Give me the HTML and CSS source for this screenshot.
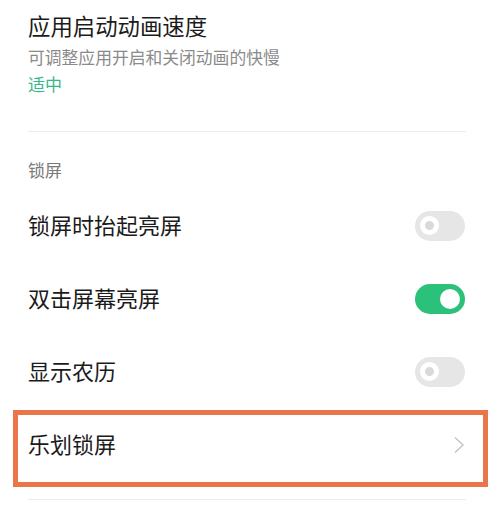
FILE: index.html
```html
<!DOCTYPE html>
<html lang="zh-CN">
<head>
  <meta charset="UTF-8">
  <title>设置</title>
  <link rel="stylesheet" href="styles.css">
</head>
<body>
  <div class="seite">
    <!-- Animation speed -->
    <div class="eintrag-block">
      <div class="titel">应用启动动画速度</div>
      <div class="untertitel">可调整应用开启和关闭动画的快慢</div>
      <div class="wert">适中</div>
    </div>

    <div class="trenner"></div>

    <div class="gruppe">锁屏</div>

    <div class="zeile">
      <span class="zeile-text">锁屏时抬起亮屏</span>
      <span class="schalter"><span class="knopf"></span></span>
    </div>
    <div class="zeile">
      <span class="zeile-text">双击屏幕亮屏</span>
      <span class="schalter an"><span class="knopf"></span></span>
    </div>
    <div class="zeile">
      <span class="zeile-text">显示农历</span>
      <span class="schalter"><span class="knopf"></span></span>
    </div>
    <div class="zeile markiert">
      <span class="zeile-text">乐划锁屏</span>
      <svg class="pfeil" width="12" height="18" viewBox="0 0 12 18">
        <path d="M2 1.5 L10 9 L2 16.5" fill="none" stroke="#c4c4c4" stroke-width="1.4"/>
      </svg>
    </div>

    <div class="trenner unten"></div>
  </div>
</body>
</html>
```

FILE: styles.css
```css
body {
  margin: 0;
  background-color: #fff;
  font-family: "Noto Sans CJK SC", "Noto Sans", sans-serif;
  color: #1b1b1b;
}

.seite {
  padding: 11px 34px 0 28px;
}

.titel {
  font-size: 22.4px;
  line-height: 28px;
}

.untertitel {
  font-size: 16.8px;
  line-height: 24px;
  color: #8a8a8a;
  margin-top: 6px;
}

.wert {
  font-size: 17px;
  line-height: 24px;
  color: #36b98a;
  margin-top: 3px;
}

.trenner {
  height: 1px;
  background-color: #ececec;
  margin-top: 35px;
}

.trenner.unten {
  margin-top: 17px;
}

.gruppe {
  font-size: 17px;
  line-height: 24px;
  color: #7a7a7a;
  margin-top: 26px;
  margin-bottom: 8px;
}

.zeile {
  position: relative;
  height: 73px;
  display: flex;
  align-items: center;
  justify-content: space-between;
}

.zeile-text {
  font-size: 22px;
  line-height: 28px;
  margin-bottom: 5px;
}

.schalter {
  position: relative;
  width: 50px;
  height: 30px;
  border-radius: 15px;
  background-color: #e6e6e6;
  display: flex;
  align-items: center;
  padding-left: 5px;
  box-sizing: border-box;
  margin-bottom: 2px;
  margin-right: 1px;
}

.schalter .knopf {
  width: 19px;
  height: 19px;
  border-radius: 50%;
  box-sizing: border-box;
  border: 5px solid #fff;
  background-color: #d9d9d9;
}

.schalter.an {
  background-color: #2bc17b;
  justify-content: flex-end;
  padding-left: 0;
  padding-right: 5px;
}

.schalter.an .knopf {
  width: 20px;
  height: 20px;
  border: none;
  background-color: #fff;
}

.pfeil {
  margin-right: 1px;
  margin-bottom: 2px;
}

/* annotation frame */
.zeile.markiert::after {
  content: "";
  position: absolute;
  left: -15px;
  right: -22px;
  top: 1px;
  bottom: -5px;
  border: 5px solid #ea7548;
}
```
